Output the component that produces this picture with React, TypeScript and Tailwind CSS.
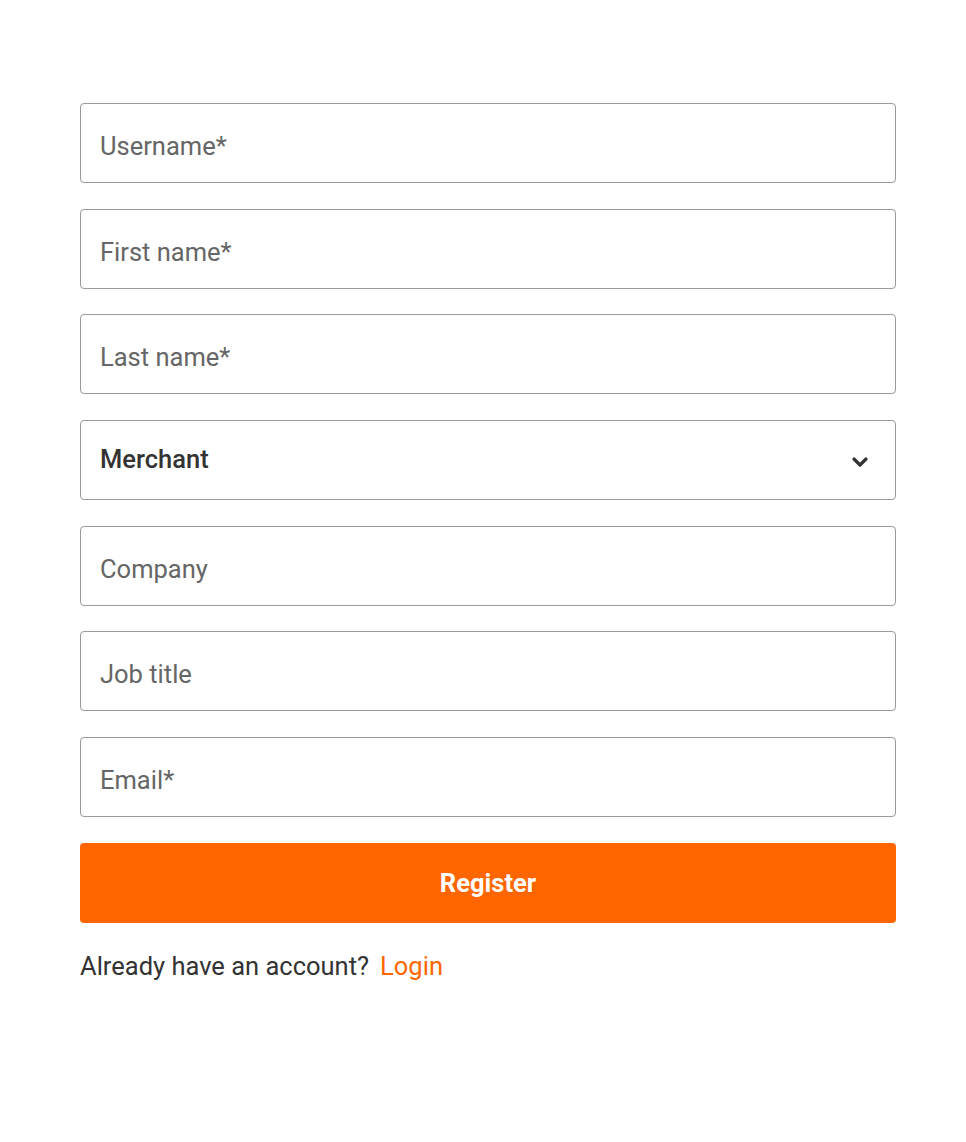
import React from "react";

const fields = ["Username*", "First name*", "Last name*"];
const fields2 = ["Company", "Job title", "Email*"];

function Field({ label }: { label: string }) {
  return (
    <div className="h-[80px] w-full rounded-[4px] border border-[#9a9a9a] flex items-center px-[19px] pt-[6px] text-[25.5px] text-[#666666]">
      {label}
    </div>
  );
}

export default function App() {
  return (
    <div
      className="min-h-[1142px] bg-white px-[80px] pt-[103px]"
      style={{ fontFamily: "Roboto, 'Liberation Sans', sans-serif" }}
    >
      <div className="w-[816px] flex flex-col gap-[25.7px]">
        {fields.map((f) => (
          <Field key={f} label={f} />
        ))}
        <div className="h-[80px] w-full rounded-[4px] border border-[#9a9a9a] flex items-center justify-between pl-[19px] pr-[26px] text-[25.5px] font-medium text-[#333333]">
          <span className="-mt-[1px]">Merchant</span>
          <svg width="18" height="12" viewBox="0 0 18 12" className="mt-[4px]">
            <path d="M3 3 L9 9 L15 3" fill="none" stroke="#333" strokeWidth="3.2" strokeLinecap="round" strokeLinejoin="round" />
          </svg>
        </div>
        {fields2.map((f) => (
          <Field key={f} label={f} />
        ))}
        <button className="h-[80px] w-full rounded-[4px] bg-[#ff6600] text-white text-[25.5px] font-bold">
          Register
        </button>
      </div>
      <div className="mt-[24px] text-[25.5px] text-[#333333] flex gap-[11px]">
        <span>Already have an account?</span>
        <span className="text-[#ff6600]">Login</span>
      </div>
    </div>
  );
}
